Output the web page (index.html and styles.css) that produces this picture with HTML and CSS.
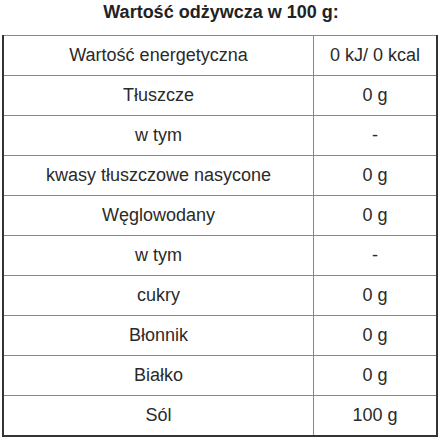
FILE: index.html
```html
<!DOCTYPE html>
<html lang="pl">
<head>
<meta charset="utf-8">
<link rel="stylesheet" href="styles.css">
</head>
<body>
<div class="wrap">
  <h2 class="title">Wartość odżywcza w 100 g:</h2>
  <table class="nutri">
    <tr><td>Wartość energetyczna</td><td>0 kJ/ 0 kcal</td></tr>
    <tr><td>Tłuszcze</td><td>0 g</td></tr>
    <tr><td>w tym</td><td>-</td></tr>
    <tr><td>kwasy tłuszczowe nasycone</td><td>0 g</td></tr>
    <tr><td>Węglowodany</td><td>0 g</td></tr>
    <tr><td>w tym</td><td>-</td></tr>
    <tr><td>cukry</td><td>0 g</td></tr>
    <tr><td>Błonnik</td><td>0 g</td></tr>
    <tr><td>Białko</td><td>0 g</td></tr>
    <tr><td>Sól</td><td>100 g</td></tr>
  </table>
</div>
</body>
</html>
```
FILE: styles.css
```css
html, body {
  margin: 0;
  padding: 0;
  background: #fff;
}
.wrap {
  width: 442px;
  font-family: "Liberation Sans", Arial, sans-serif;
  color: #333;
}
.title {
  margin: 0;
  height: 35px;
  line-height: 24px;
  font-size: 18px;
  font-weight: bold;
  text-align: center;
  color: #222;
}
.nutri {
  margin-left: 2px;
  width: 436px;
  border-collapse: collapse;
  border-top: 1px solid #555;
  border-left: 2px solid #333;
  border-right: 2px solid #333;
  border-bottom: 2px solid #333;
}
.nutri td {
  border: 1px solid #888;
  height: 39px;
  padding: 0;
  text-align: center;
  font-size: 18px;
  color: #2a2a2a;
}
.nutri td:first-child {
  width: 309px;
}
```
